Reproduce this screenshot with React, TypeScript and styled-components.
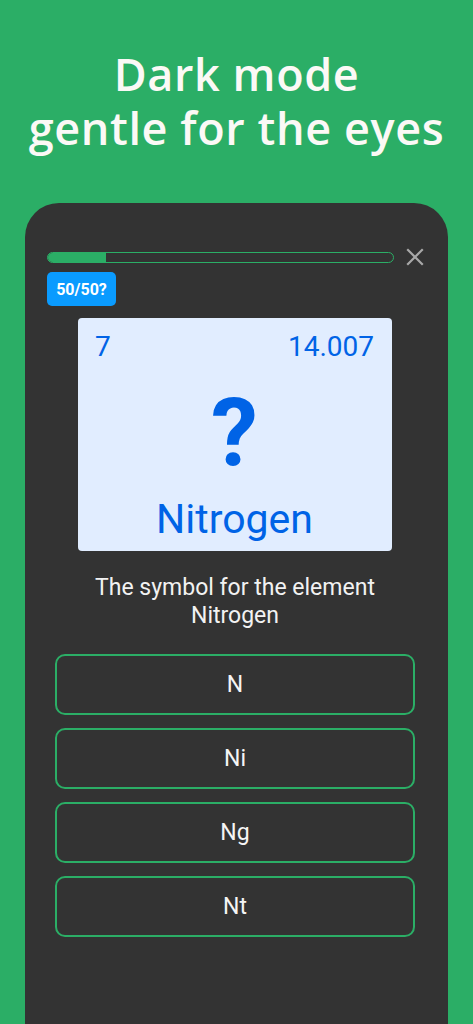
import React from 'react';
import styled, { createGlobalStyle } from 'styled-components';

const GlobalStyle = createGlobalStyle`
  html, body {
    margin: 0;
    padding: 0;
    background: #2bae66;
  }
  * { box-sizing: border-box; }
`;

const Page = styled.div`
  width: 473px;
  height: 1024px;
  overflow: hidden;
  background: #2bae66;
  display: flex;
  flex-direction: column;
  align-items: center;
  font-family: Roboto, 'Noto Sans', sans-serif;
`;

const Headline = styled.h1`
  margin: 47px 0 0;
  display: flex;
  flex-direction: column;
  align-items: center;
  font-family: 'Open Sans', 'Noto Sans', sans-serif;
  font-weight: 600;
  font-size: 45px;
  color: #fbf9f6;
  text-align: center;
  letter-spacing: 0.6px;
`;

const HeadlineLine = styled.span`
  display: block;
  height: 54px;
  line-height: 54px;
`;

const Phone = styled.div`
  margin-top: 48px;
  width: 423px;
  flex: 1;
  background: #333333;
  border-radius: 34px 34px 0 0;
  padding: 43px 22px 0;
  display: flex;
  flex-direction: column;
`;

const TopRow = styled.div`
  display: flex;
  align-items: center;
  gap: 10px;
`;

const Track = styled.div`
  flex: 1;
  height: 11px;
  border: 1px solid #2bae66;
  border-radius: 6px;
  overflow: hidden;
`;

const Fill = styled.div`
  height: 100%;
  background: #2bae66;
`;

const CloseButton = styled.button`
  width: 22px;
  height: 22px;
  padding: 0;
  border: none;
  background: none;
  display: flex;
  align-items: center;
  justify-content: center;
`;

const HintButton = styled.button`
  align-self: flex-start;
  margin-top: 4px;
  height: 34px;
  width: 69px;
  padding: 0;
  border: none;
  border-radius: 5px;
  background: #0a9bff;
  color: #fff;
  font-family: Roboto, sans-serif;
  font-weight: 700;
  font-size: 16px;
`;

const ElementCard = styled.div`
  margin: 12px 0 0 31px;
  width: 314px;
  height: 233px;
  background: #e1edff;
  border-radius: 4px;
  padding: 13px 18px 0 17px;
  color: #0063e6;
  display: flex;
  flex-direction: column;
`;

const CardTop = styled.div`
  display: flex;
  justify-content: space-between;
  font-size: 28px;
  line-height: 32px;
`;

const Mystery = styled.div`
  text-align: center;
  font-weight: 700;
  font-size: 94px;
  line-height: 100px;
  margin-top: 20px;
`;

const ElementName = styled.div`
  text-align: center;
  font-size: 41px;
  line-height: 48px;
  margin-top: 12px;
`;

const Question = styled.p`
  margin: 23px 3px 0 0;
  color: #f2f2f2;
  font-size: 23px;
  line-height: 28px;
  text-align: center;
`;

const Options = styled.div`
  margin: 24px 11px 0 8px;
  display: flex;
  flex-direction: column;
  gap: 13px;
`;

const Option = styled.button`
  height: 61px;
  border: 2px solid #2bae66;
  border-radius: 10px;
  background: transparent;
  color: #f5f5f5;
  font-family: Roboto, sans-serif;
  font-size: 23px;
`;

const options = ['N', 'Ni', 'Ng', 'Nt'];

export default function App() {
  return (
    <>
      <GlobalStyle />
      <Page>
        <Headline>
          <HeadlineLine>Dark mode</HeadlineLine>
          <HeadlineLine>gentle for the eyes</HeadlineLine>
        </Headline>
        <Phone>
          <TopRow>
            <Track>
              <Fill style={{ width: `${(58 / 347) * 100}%` }} />
            </Track>
            <CloseButton aria-label="close">
              <svg width="18" height="18" viewBox="0 0 18 18">
                <path d="M2 2L16 16M16 2L2 16" stroke="#a8a8a8" strokeWidth="2.2" strokeLinecap="square" />
              </svg>
            </CloseButton>
          </TopRow>
          <HintButton>50/50?</HintButton>
          <ElementCard>
            <CardTop>
              <span>7</span>
              <span>14.007</span>
            </CardTop>
            <Mystery>?</Mystery>
            <ElementName>Nitrogen</ElementName>
          </ElementCard>
          <Question>
            The symbol for the element
            <br />
            Nitrogen
          </Question>
          <Options>
            {options.map((o) => (
              <Option key={o}>{o}</Option>
            ))}
          </Options>
        </Phone>
      </Page>
    </>
  );
}
